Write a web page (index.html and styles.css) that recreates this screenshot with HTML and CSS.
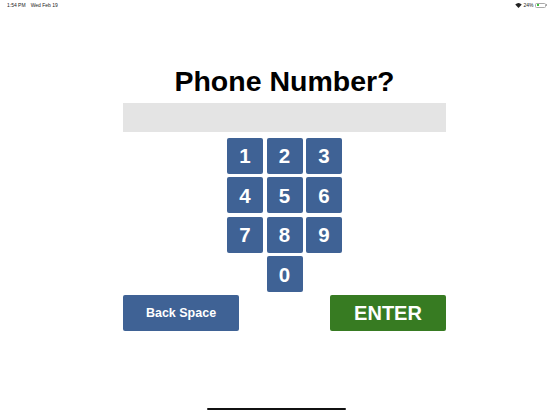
FILE: index.html
```html
<!DOCTYPE html>
<html lang="en">
<head>
    <meta charset="UTF-8">
    <title>Phone Number</title>
    <link rel="stylesheet" href="styles.css">
</head>
<body>
    <div class="status-bar">
        <div class="status-left">
            <span>1:54 PM</span>
            <span>Wed Feb 19</span>
        </div>
        <div class="status-right">
            <svg class="wifi" width="7" height="5" viewBox="0 0 14 10">
                <path d="M7 10 L0.5 3.2 A9.5 9.5 0 0 1 13.5 3.2 Z" fill="#222"/>
            </svg>
            <span>24%</span>
            <div class="battery"><div class="battery-level"></div></div>
            <div class="battery-cap"></div>
        </div>
    </div>

    <div class="content">
        <h1>Phone Number?</h1>
        <div class="display"></div>

        <div class="keypad">
            <button class="key">1</button>
            <button class="key">2</button>
            <button class="key">3</button>
            <button class="key">4</button>
            <button class="key">5</button>
            <button class="key">6</button>
            <button class="key">7</button>
            <button class="key">8</button>
            <button class="key">9</button>
            <button class="key key-zero">0</button>
        </div>

        <div class="actions">
            <button class="action back">Back Space</button>
            <button class="action enter">ENTER</button>
        </div>
    </div>

    <div class="home-bar"></div>
</body>
</html>
```

FILE: styles.css
```css
body {
    font-family: "Liberation Sans", Arial, sans-serif;
    margin: 0;
    width: 552px;
    height: 414px;
    background-color: #fff;
    overflow: hidden;
    display: flex;
    flex-direction: column;
}

.status-bar {
    width: 100%;
    box-sizing: border-box;
    height: 10px;
    padding: 0 5px 0 7px;
    display: flex;
    justify-content: space-between;
    align-items: center;
    font-size: 5px;
    color: #222;
}

.status-left {
    display: flex;
    gap: 5px;
}

.status-right {
    display: flex;
    align-items: center;
    gap: 1.5px;
}

.battery {
    width: 11px;
    height: 5px;
    box-sizing: border-box;
    border: 0.5px solid #aaa;
    border-radius: 1.5px;
    padding: 0.5px;
}

.battery-level {
    width: 35%;
    height: 100%;
    background-color: #3fc13f;
}

.battery-cap {
    width: 1px;
    height: 2px;
    margin-left: -1.5px;
    background-color: #aaa;
}

.content {
    width: 323px;
    margin-left: 123px;
    display: flex;
    flex-direction: column;
    align-items: center;
}

h1 {
    margin: 51px 0 0;
    font-size: 28.5px;
    line-height: 40px;
    font-weight: bold;
    color: #000;
    text-align: center;
}

.display {
    width: 100%;
    height: 28.5px;
    margin-top: 2px;
    background-color: #e4e4e4;
}

button {
    font-family: inherit;
    font-weight: bold;
    color: #fff;
    border: none;
    padding: 1px 0 0;
    border-radius: 2px;
}

.keypad {
    margin-top: 6px;
    display: grid;
    grid-template-columns: repeat(3, 36px);
    grid-auto-rows: 36px;
    gap: 3.5px;
}

.key {
    font-size: 20.5px;
    background-color: #3f6295;
}

.key-zero {
    grid-column: 2;
}

.actions {
    width: 100%;
    margin-top: 2.5px;
    display: flex;
    justify-content: space-between;
}

.action {
    width: 116px;
    height: 36px;
}

.back {
    font-size: 12.5px;
    background-color: #3f6295;
}

.enter {
    font-size: 20px;
    background-color: #377b22;
}

.home-bar {
    position: absolute;
    left: 207px;
    top: 408px;
    width: 139px;
    height: 2px;
    border-radius: 1px;
    background-color: #111;
}
```
